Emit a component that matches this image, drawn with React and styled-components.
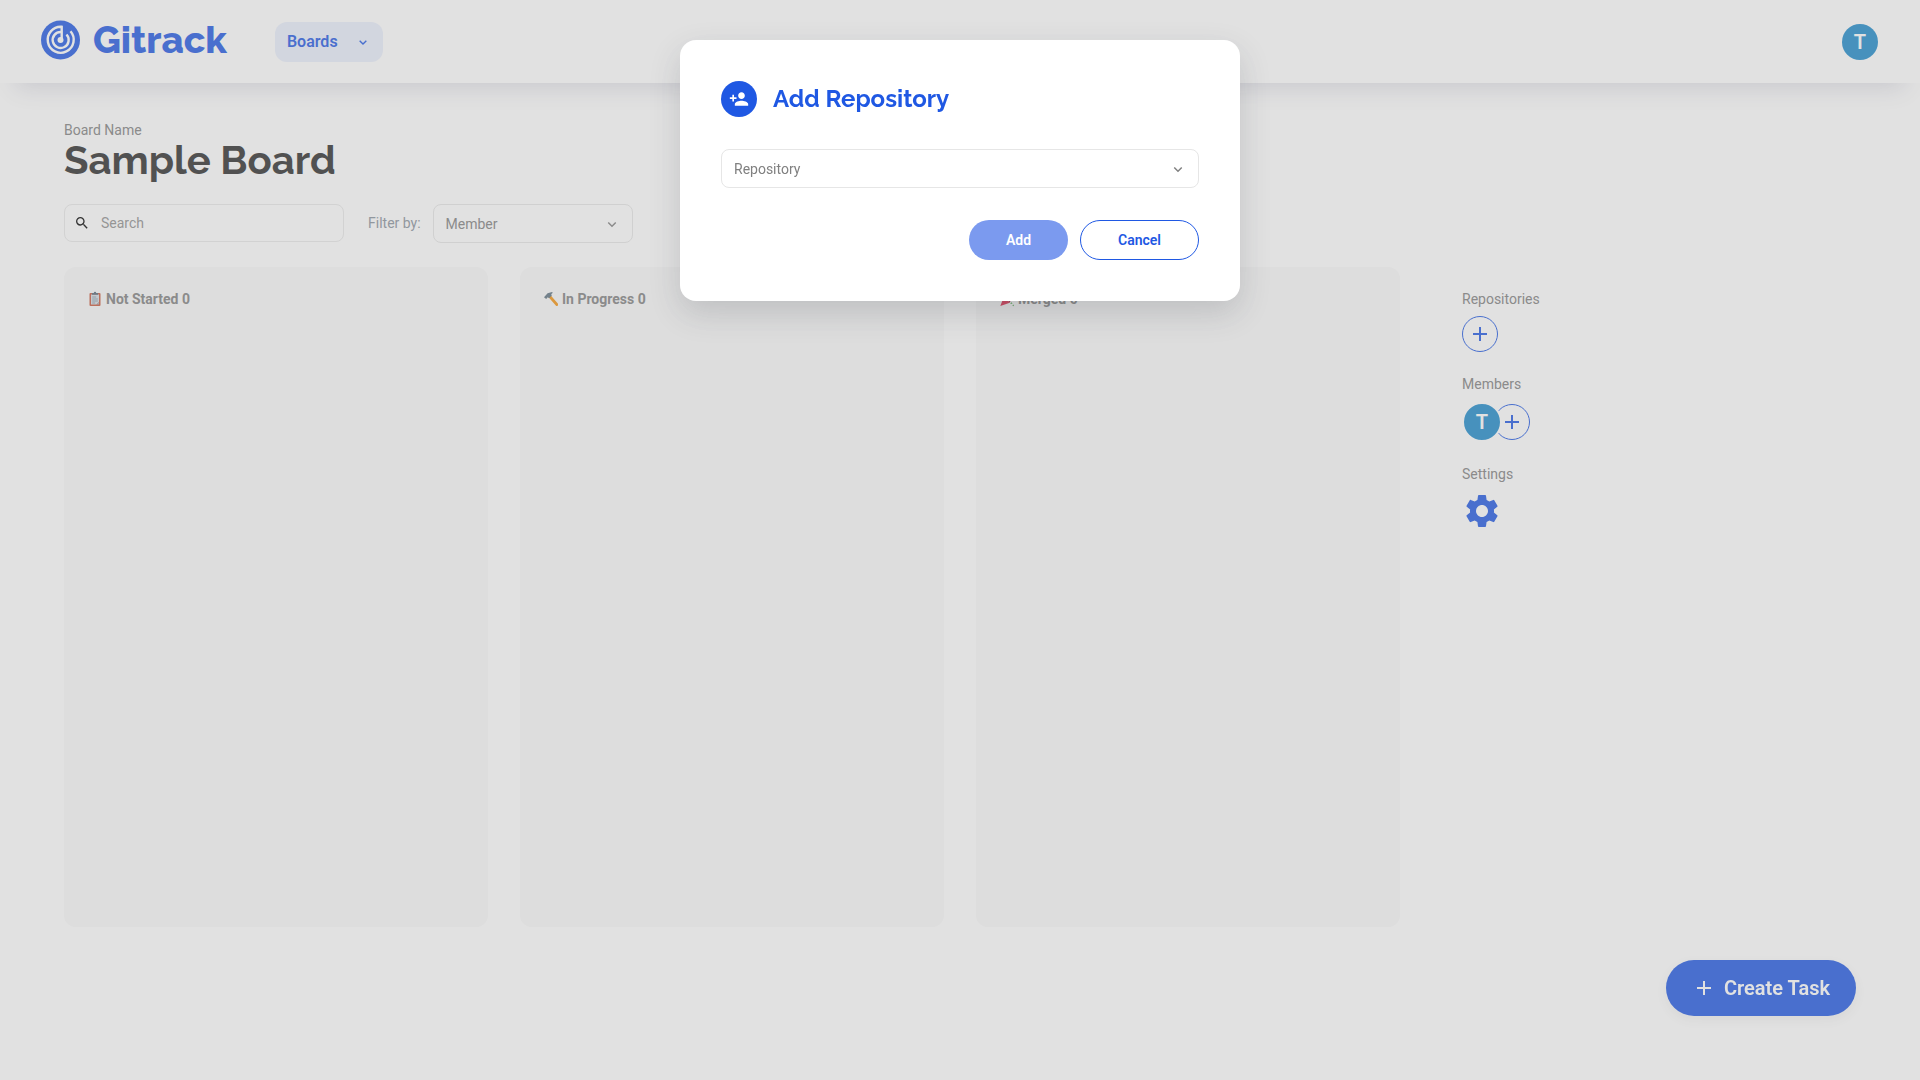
import React from "react";
import styled, { createGlobalStyle } from "styled-components";
import { MdPersonAdd, MdSearch, MdSettings, MdAdd } from "react-icons/md";
import { BiChevronDown } from "react-icons/bi";

const GlobalStyle = createGlobalStyle`
  *, *::before, *::after { box-sizing: border-box; }
  body {
    margin: 0;
    background: #ffffff;
    color: #808080;
    font-family: Roboto, "Liberation Sans", sans-serif;
    font-size: 14px;
    line-height: 20px;
  }
  button, input, select { font: inherit; }
  h1, h2, p { margin: 0; }
`;

const Page = styled.div`
  min-height: 100vh;
`;

const Header = styled.header`
  display: flex;
  align-items: center;
  gap: 48px;
  height: 83px;
  padding: 0 42px 0 40px;
  box-shadow: 0 20px 24px -16px rgba(20, 20, 70, 0.16);
`;

const Logo = styled.a`
  display: flex;
  align-items: center;
  gap: 12px;
  margin-bottom: 4px;
  color: #1f58e3;
  font-family: Raleway, Lato, sans-serif;
  font-size: 38px;
  line-height: 44px;
  font-weight: 800;
  text-decoration: none;
`;

const BoardsButton = styled.button`
  display: flex;
  align-items: center;
  justify-content: space-between;
  width: 108px;
  height: 40px;
  padding: 0 12px;
  border: 0;
  border-radius: 12px;
  background: #e9effd;
  color: #1f58e3;
  font-size: 16px;
  font-weight: 600;
`;

const Avatar = styled.span`
  display: flex;
  flex: none;
  align-items: center;
  justify-content: center;
  width: ${(p) => (p.$ringed ? 40 : 36)}px;
  height: ${(p) => (p.$ringed ? 40 : 36)}px;
  margin-left: ${(p) => (p.$ringed ? 0 : "auto")};
  border: ${(p) => (p.$ringed ? "2px solid #ffffff" : 0)};
  border-radius: 50%;
  background: #1d8acb;
  color: #ffffff;
  font-size: 20px;
  font-weight: 600;
  position: relative;
  z-index: 1;
`;

const Main = styled.main`
  padding: 37px 64px 64px;
`;

const BoardTitle = styled.h1`
  color: #2c2c2c;
  font-family: Raleway, Lato, sans-serif;
  font-size: 40px;
  line-height: 40px;
  font-weight: 700;
`;

const Filters = styled.div`
  display: flex;
  align-items: flex-start;
  margin: 24px 0;
`;

const SearchBox = styled.label`
  display: flex;
  align-items: center;
  gap: 11px;
  width: 280px;
  height: 38px;
  padding: 0 9px;
  border: 1px solid #e9e9e9;
  border-radius: 8px;
  color: #000000;
`;

const SearchInput = styled.input`
  flex: 1;
  min-width: 0;
  padding: 0;
  border: 0;
  outline: 0;
  background: transparent;
  &::placeholder { color: #909090; opacity: 1; }
`;

const FilterLabel = styled.label`
  margin: 9px 12px 0 24px;
  color: #8a929c;
`;

const SelectBox = styled.div`
  display: grid;
  align-items: center;
  width: ${(p) => p.$width};
  > * { grid-area: 1 / 1; }
  > svg {
    justify-self: end;
    margin-right: 12px;
    color: #808080;
    pointer-events: none;
  }
`;

const Select = styled.select`
  appearance: none;
  width: 100%;
  height: 39px;
  padding: 0 12px;
  border: 1px solid #e6e6e6;
  border-radius: 8px;
  background: transparent;
  color: #808080;
`;

const Board = styled.div`
  display: grid;
  grid-template-columns: repeat(4, 1fr);
  gap: 32px;
`;

const Column = styled.section`
  min-height: 660px;
  padding: 22px 24px;
  border-radius: 12px;
  background: #f9f9f9;
`;

const ColumnTitle = styled.h2`
  display: flex;
  align-items: center;
  gap: 4px;
  font-size: 14px;
  line-height: 20px;
  font-weight: 700;
`;

const Side = styled.aside`
  display: flex;
  flex-direction: column;
  gap: 22px;
  padding: 22px 0 0 30px;
`;

const SideGroup = styled.section`
  display: flex;
  flex-direction: column;
  gap: ${(p) => p.$gap}px;
`;

const SideRow = styled.div`
  display: flex;
  align-items: center;
`;

const RoundButton = styled.button`
  display: flex;
  align-items: center;
  justify-content: center;
  width: 36px;
  height: 36px;
  padding: 0;
  margin-left: ${(p) => (p.$overlap ? "-8px" : 0)};
  border: 1px solid #1f58e3;
  border-radius: 50%;
  background: transparent;
  color: #1f58e3;
`;

const IconButton = styled.button`
  display: flex;
  padding: 0;
  border: 0;
  background: transparent;
  color: #1f58e3;
`;

const CreateButton = styled.button`
  position: fixed;
  right: 64px;
  bottom: 64px;
  display: flex;
  align-items: center;
  gap: 8px;
  height: 56px;
  padding: 0 26px;
  border: 0;
  border-radius: 28px;
  background: #1f58e3;
  box-shadow: 0 4px 12px rgba(0, 0, 0, 0.06);
  color: #ffffff;
  font-size: 20px;
  font-weight: 600;
`;

const Overlay = styled.div`
  position: fixed;
  inset: 0;
  z-index: 10;
  display: flex;
  align-items: flex-start;
  justify-content: center;
  padding-top: 40px;
  background: rgba(162, 162, 162, 0.32);
`;

const Modal = styled.div`
  width: 560px;
  padding: 41px;
  border-radius: 16px;
  background: #ffffff;
  box-shadow: 0 12px 32px rgba(30, 40, 50, 0.16);
`;

const ModalHeader = styled.div`
  display: flex;
  align-items: center;
  gap: 16px;
  margin-bottom: 32px;
`;

const ModalBadge = styled.span`
  display: flex;
  align-items: center;
  justify-content: center;
  width: 36px;
  height: 36px;
  border-radius: 50%;
  background: #1f58e3;
  color: #ffffff;
`;

const ModalTitle = styled.h2`
  color: #1f58e3;
  font-family: Raleway, Lato, sans-serif;
  font-size: 24px;
  line-height: 32px;
  font-weight: 700;
`;

const Actions = styled.div`
  display: flex;
  justify-content: flex-end;
  gap: 12px;
  margin-top: 32px;
`;

const PillButton = styled.button`
  height: 40px;
  padding: 0 37px;
  border: ${(p) => (p.$primary ? 0 : "1px solid #1f58e3")};
  border-radius: 20px;
  background: ${(p) => (p.$primary ? "#7b9aef" : "#ffffff")};
  color: ${(p) => (p.$primary ? "#ffffff" : "#1f58e3")};
  font-weight: 600;
`;

const LogoMark = () => (
  <svg width="41" height="40" viewBox="0 0 41 40" fill="none" aria-hidden="true">
    <circle cx="20.5" cy="20" r="19.5" fill="#1f58e3" />
    <g stroke="#ffffff" strokeWidth="2.4">
      <path d="M30.5 11.2A13 13 0 1 1 21.7 6.8V19" />
      <path d="M26.5 14.5A8 8 0 1 1 21 12" />
    </g>
    <circle cx="20.5" cy="20" r="3" fill="#ffffff" />
  </svg>
);

const ClipboardIcon = () => (
  <svg width="14" height="16" viewBox="0 0 14 16" aria-hidden="true">
    <rect x="1.5" y="2" width="11" height="13" rx="1" fill="#c8593d" />
    <path d="M3 3.5h8v7.5l-2.5 2.5H3z" fill="#d3dce4" />
    <path d="M11 11v2.5H8.5z" fill="#9fb0bd" />
    <path d="M4 3.8V2h1.8a1.2 1.2 0 0 1 2.4 0H10v1.8z" fill="#54697a" />
    <path d="M4.2 6h4M4.2 8h5.6M4.2 10h5.6M4.2 12h3" stroke="#8496a5" strokeWidth="0.9" />
  </svg>
);

const HammerIcon = () => (
  <svg width="14" height="16" viewBox="0 0 14 16" aria-hidden="true">
    <path d="M4.6 6.2 6.6 4.2 13.8 12.4a1.2 1.2 0 0 1-2 2z" fill="#f6940f" />
    <path d="M0 6.2 3.6 2.2 8 1l.8.8-1.6 1.4.6 1.4-2.6 2.6-1.5-1-1.5 1.8z" fill="#5d7280" />
  </svg>
);

const PartyIcon = () => (
  <svg width="14" height="16" viewBox="0 0 14 16" aria-hidden="true">
    <path d="M0.3 15 4 5.5 9.8 11.8z" fill="#dc2748" />
    <path d="M4 5.5a4 2 48 0 1 5.8 6.3z" fill="#a0142f" />
    <path d="M6 6c0-2 1-3 .5-5M8 8c1.5-1 3-1 5-.5" stroke="#e8a52e" strokeWidth="1" fill="none" />
    <path d="m10 12.4 1.8-1.2.6 1.8zM12.2 14.4l1.6-1v1.8zM10.5 2.5l1.5-.5-.5 1.5z" fill="#4da64a" />
    <circle cx="3" cy="3" r="0.9" fill="#4da64a" />
  </svg>
);

const columns = [
  { title: "Not Started 0", Icon: ClipboardIcon },
  { title: "In Progress 0", Icon: HammerIcon },
  { title: "Merged 0", Icon: PartyIcon },
];

export default function App() {
  return (
    <Page>
      <GlobalStyle />
      <Header>
        <Logo href="#">
          <LogoMark />
          Gitrack
        </Logo>
        <BoardsButton type="button">
          Boards
          <BiChevronDown size={16} />
        </BoardsButton>
        <Avatar>T</Avatar>
      </Header>
      <Main>
        <p>Board Name</p>
        <BoardTitle>Sample Board</BoardTitle>
        <Filters>
          <SearchBox>
            <MdSearch size={16} />
            <SearchInput type="search" aria-label="Search" placeholder="Search" />
          </SearchBox>
          <FilterLabel htmlFor="member">Filter by:</FilterLabel>
          <SelectBox $width="200px">
            <Select id="member">
              <option>Member</option>
            </Select>
            <BiChevronDown size={18} />
          </SelectBox>
        </Filters>
        <Board>
          {columns.map(({ title, Icon }) => (
            <Column key={title}>
              <ColumnTitle>
                <Icon />
                {title}
              </ColumnTitle>
            </Column>
          ))}
          <Side>
            <SideGroup $gap={7}>
              <p>Repositories</p>
              <RoundButton type="button" aria-label="Add repository">
                <MdAdd size={24} />
              </RoundButton>
            </SideGroup>
            <SideGroup $gap={8}>
              <p>Members</p>
              <SideRow>
                <Avatar $ringed>T</Avatar>
                <RoundButton type="button" aria-label="Add member" $overlap>
                  <MdAdd size={24} />
                </RoundButton>
              </SideRow>
            </SideGroup>
            <SideGroup $gap={7}>
              <p>Settings</p>
              <IconButton type="button" aria-label="Settings">
                <MdSettings size={40} />
              </IconButton>
            </SideGroup>
          </Side>
        </Board>
      </Main>
      <CreateButton type="button">
        <MdAdd size={24} />
        Create Task
      </CreateButton>
      <Overlay>
        <Modal role="dialog" aria-modal="true" aria-labelledby="modal-title">
          <ModalHeader>
            <ModalBadge>
              <MdPersonAdd size={20} />
            </ModalBadge>
            <ModalTitle id="modal-title">Add Repository</ModalTitle>
          </ModalHeader>
          <SelectBox $width="100%">
            <Select aria-label="Repository">
              <option>Repository</option>
            </Select>
            <BiChevronDown size={18} />
          </SelectBox>
          <Actions>
            <PillButton type="button" $primary>Add</PillButton>
            <PillButton type="button">Cancel</PillButton>
          </Actions>
        </Modal>
      </Overlay>
    </Page>
  );
}
